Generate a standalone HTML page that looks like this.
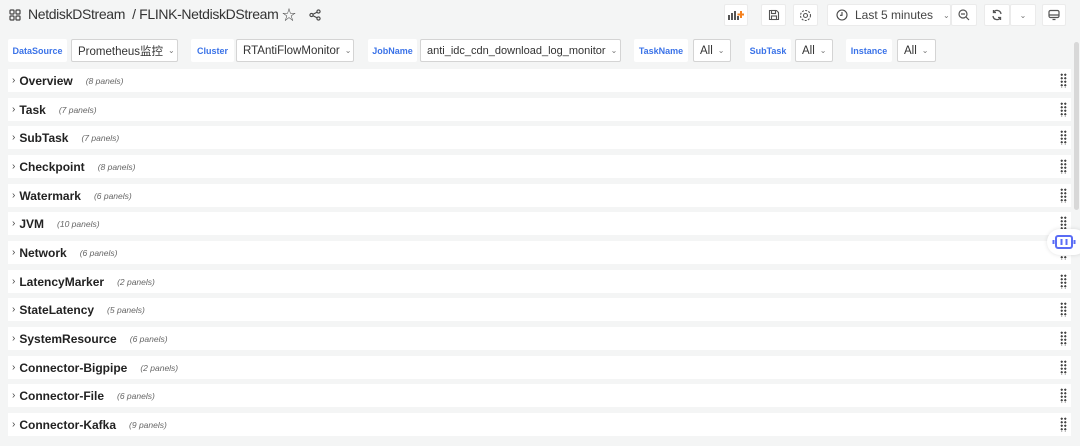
<!DOCTYPE html>
<html><head><meta charset="utf-8"><style>
*{box-sizing:border-box;margin:0;padding:0}
body{width:1080px;height:446px;overflow:hidden;background:#f4f5f5;font-family:"Liberation Sans","Noto Sans CJK SC",sans-serif;color:#222;position:relative}
.a{position:absolute}
.btn{position:absolute;top:4px;height:22px;background:#fff;border:1px solid #ebebeb;border-radius:2px;display:flex;align-items:center;justify-content:center}
.lbl{position:absolute;top:39px;height:23px;background:#fff;color:#3b73e8;font-size:9px;font-weight:bold;display:flex;align-items:center;justify-content:center;border-radius:2px;white-space:nowrap}
.sel{position:absolute;top:39px;height:23px;background:#fff;border:1px solid #d4d4d4;border-radius:2px;font-size:11.5px;color:#333;display:flex;align-items:center;padding-left:6px;white-space:nowrap;overflow:hidden}
.sel .c{font-size:8px;color:#777;margin-left:5px}
.row{position:absolute;left:8px;width:1063px;height:23px;background:#fff;display:flex;align-items:center;padding-left:4px;white-space:nowrap}
.row b{font-size:12px;color:#222;margin-left:4px}
.row i{font-size:8.5px;color:#666;margin-left:13px}
.row .ch{font-size:10px;color:#444}
.dots{position:absolute;right:4px;top:4px;width:7px;height:15px;background-image:radial-gradient(circle,#444 1px,transparent 1.2px);background-size:3.5px 3.5px}
</style></head><body>
<svg class="a" style="left:9px;top:9px" width="12" height="12" viewBox="0 0 12 12" fill="none" stroke="#444" stroke-width="1.2"><rect x="1" y="1" width="4" height="4" rx=".8"/><rect x="7" y="1" width="4" height="4" rx=".8"/><rect x="1" y="7" width="4" height="4" rx=".8"/><rect x="7" y="7" width="4" height="4" rx=".8"/></svg>
<div class="a" style="left:28px;top:6px;font-size:14px;letter-spacing:-0.35px;color:#333;white-space:nowrap">NetdiskDStream &nbsp;/ FLINK-NetdiskDStream</div>
<div class="a" style="left:282px;top:5px;font-size:14px;color:#444">☆</div>
<svg class="a" style="left:309px;top:9px" width="12" height="12" viewBox="0 0 12 12" fill="none" stroke="#444" stroke-width="1.1"><circle cx="9.5" cy="2.5" r="1.6"/><circle cx="2.5" cy="6" r="1.6"/><circle cx="9.5" cy="9.5" r="1.6"/><path d="M4 5.2L8 3.3M4 6.8L8 8.7"/></svg>

<div class="btn" style="left:724px;width:24px"><svg width="16" height="10" viewBox="0 0 16 10"><rect x="0" y="5" width="2" height="5" fill="#555"/><rect x="3" y="3" width="2" height="7" fill="#555"/><rect x="6" y="1" width="2" height="9" fill="#555"/><rect x="9" y="6" width="2" height="4" fill="#555"/><path d="M13 1v7M9.5 4.5h7" stroke="#f5821f" stroke-width="2"/></svg></div>
<div class="btn" style="left:761px;width:25px"><svg width="12" height="12" viewBox="0 0 12 12" fill="none" stroke="#555" stroke-width="1.1"><path d="M1.5 1.5h7l2 2v7h-9z"/><rect x="3.5" y="1.5" width="4" height="3"/><rect x="3.5" y="7" width="5" height="3.5"/></svg></div>
<div class="btn" style="left:793px;width:25px"><svg width="13" height="13" viewBox="0 0 13 13" fill="none" stroke="#555" stroke-width="1.1"><circle cx="6.5" cy="6.5" r="2"/><circle cx="6.5" cy="6.5" r="5" stroke-dasharray="2 1.3"/></svg></div>
<div class="btn" style="left:827px;width:124px;justify-content:flex-start;padding-left:8px;font-size:12px;color:#444;white-space:nowrap"><svg width="12" height="12" viewBox="0 0 12 12" fill="none" stroke="#444" stroke-width="1.1"><circle cx="6" cy="6" r="5"/><path d="M6 3v3.3H4"/></svg><span style="margin-left:7px">Last 5 minutes</span><span style="font-size:8px;margin-left:10px;color:#777">⌄</span></div>
<div class="btn" style="left:951px;width:26px"><svg width="12" height="12" viewBox="0 0 12 12" fill="none" stroke="#555" stroke-width="1.2"><circle cx="5" cy="5" r="4"/><path d="M3 5h4M8 8l3 3"/></svg></div>
<div class="btn" style="left:984px;width:26px"><svg width="12" height="12" viewBox="0 0 12 12" fill="none" stroke="#555" stroke-width="1.3"><path d="M10 5A4 4 0 0 0 2.5 3.5M2 7a4 4 0 0 0 7.5 1.5"/><path d="M2.5 1v2.5H5M9.5 11V8.5H7"/></svg></div>
<div class="btn" style="left:1010px;width:26px;font-size:8px;color:#777">⌄</div>
<div class="btn" style="left:1042px;width:24px"><svg width="12" height="12" viewBox="0 0 12 12" fill="none" stroke="#555" stroke-width="1.2"><rect x="1" y="1.5" width="10" height="7" rx="1.5"/><path d="M1.5 6h9M4.5 10.5h3"/></svg></div>

<div class="lbl" style="left:8px;width:59px">DataSource</div>
<div class="sel" style="left:71px;width:107px">Prometheus监控<span class="c">⌄</span></div>
<div class="lbl" style="left:191px;width:43px">Cluster</div>
<div class="sel" style="left:236px;width:118px">RTAntiFlowMonitor<span class="c">⌄</span></div>
<div class="lbl" style="left:368px;width:49px">JobName</div>
<div class="sel" style="left:420px;width:201px;font-size:11px">anti_idc_cdn_download_log_monitor<span class="c">⌄</span></div>
<div class="lbl" style="left:634px;width:54px">TaskName</div>
<div class="sel" style="left:693px;width:38px">All<span class="c">⌄</span></div>
<div class="lbl" style="left:745px;width:46px">SubTask</div>
<div class="sel" style="left:795px;width:38px">All<span class="c">⌄</span></div>
<div class="lbl" style="left:846px;width:46px">Instance</div>
<div class="sel" style="left:897px;width:39px">All<span class="c">⌄</span></div>

<div class="row" style="top:69px"><span class="ch">›</span><b>Overview</b><i>(8 panels)</i><div class="dots"></div></div>
<div class="row" style="top:98px"><span class="ch">›</span><b>Task</b><i>(7 panels)</i><div class="dots"></div></div>
<div class="row" style="top:126px"><span class="ch">›</span><b>SubTask</b><i>(7 panels)</i><div class="dots"></div></div>
<div class="row" style="top:155px"><span class="ch">›</span><b>Checkpoint</b><i>(8 panels)</i><div class="dots"></div></div>
<div class="row" style="top:184px"><span class="ch">›</span><b>Watermark</b><i>(6 panels)</i><div class="dots"></div></div>
<div class="row" style="top:212px"><span class="ch">›</span><b>JVM</b><i>(10 panels)</i><div class="dots"></div></div>
<div class="row" style="top:241px"><span class="ch">›</span><b>Network</b><i>(6 panels)</i><div class="dots"></div></div>
<div class="row" style="top:270px"><span class="ch">›</span><b>LatencyMarker</b><i>(2 panels)</i><div class="dots"></div></div>
<div class="row" style="top:298px"><span class="ch">›</span><b>StateLatency</b><i>(5 panels)</i><div class="dots"></div></div>
<div class="row" style="top:327px"><span class="ch">›</span><b>SystemResource</b><i>(6 panels)</i><div class="dots"></div></div>
<div class="row" style="top:356px"><span class="ch">›</span><b>Connector-Bigpipe</b><i>(2 panels)</i><div class="dots"></div></div>
<div class="row" style="top:384px"><span class="ch">›</span><b>Connector-File</b><i>(6 panels)</i><div class="dots"></div></div>
<div class="row" style="top:413px"><span class="ch">›</span><b>Connector-Kafka</b><i>(9 panels)</i><div class="dots"></div></div>

<div class="a" style="left:1074px;top:42px;width:5px;height:168px;background:#d8d8d8;border-radius:3px"></div>
<div class="a" style="left:1047px;top:229px;width:40px;height:26px;background:#fff;border-radius:13px;box-shadow:0 0 4px rgba(0,0,0,.12)"></div>
<svg class="a" style="left:1052px;top:234px" width="24" height="16" viewBox="0 0 24 16"><rect x="4" y="2" width="16" height="12" rx="2" fill="none" stroke="#5a6cf5" stroke-width="2"/><rect x="8.5" y="5" width="2" height="6" fill="#5a6cf5"/><rect x="13.5" y="5" width="2" height="6" fill="#5a6cf5"/><rect x="0.5" y="6" width="2" height="4" fill="#5a6cf5"/><rect x="21.5" y="6" width="2" height="4" fill="#5a6cf5"/></svg>
</body></html>
